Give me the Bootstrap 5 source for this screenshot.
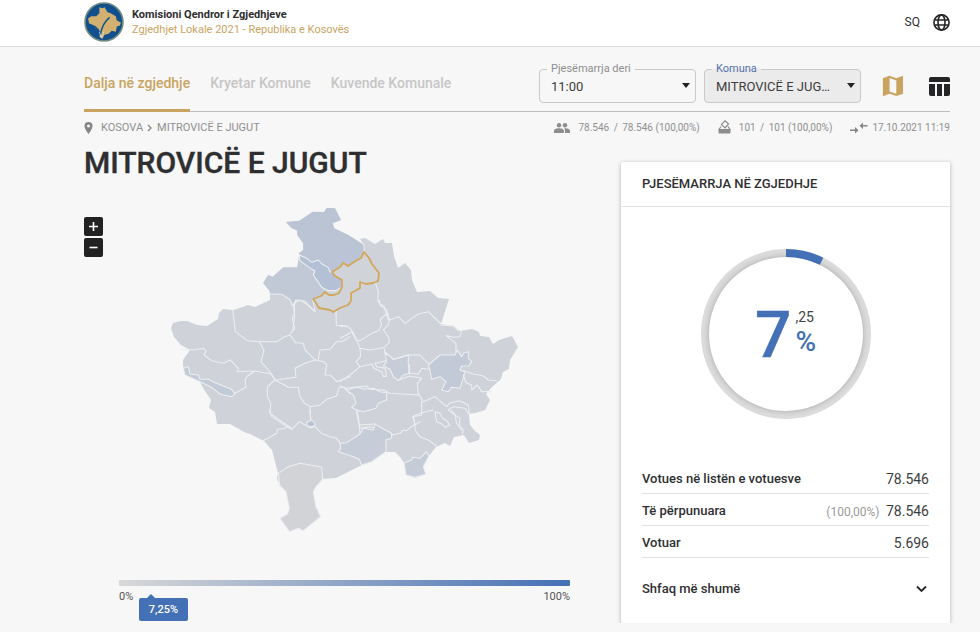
<!DOCTYPE html>
<html lang="sq">
<head>
<meta charset="utf-8">
<meta name="viewport" content="width=device-width, initial-scale=1">
<title>Zgjedhjet Lokale 2021 - Mitrovicë e Jugut</title>
<link href="https://cdn.jsdelivr.net/npm/bootstrap@5.3.0/dist/css/bootstrap.min.css" rel="stylesheet">
<style>
:root{--gold:#c9a461;--blue:#4470b5;--ink:#2f2f31;--muted:#909090}
body{font-family:Roboto,"Liberation Sans",sans-serif;background:#f7f7f7;color:var(--ink);font-size:13px;line-height:16px}
a{text-decoration:none;color:inherit}
.page-pad{padding-left:84px;padding-right:30px}
.site-head{background:#fff;border-bottom:1px solid #dedede;height:47px;padding-bottom:2px}
.brand-title{font-size:11px;line-height:15px;font-weight:700}
.brand-sub{font-size:11px;line-height:15px;color:var(--gold)}
.lang{font-size:12px;gap:13px}
.topbar{height:65px;border-bottom:1px solid #bdbdbd}
.tabs a{font-size:14px;font-weight:500;color:#c6c6c6;height:65px;padding-top:28px;border-bottom:3px solid transparent}
.tabs a.on{color:var(--gold);border-color:var(--gold)}
.tools{padding-top:22px}
.pick{position:relative;width:157px}
.pick label{position:absolute;left:8px;top:-7px;padding:0 4px;font-size:11px;line-height:14px;color:#8f8f8f;background:#f7f7f7}
.pick.busy label{color:#5270ac;background:linear-gradient(#f7f7f7 50%,#ebebeb 50%)}
.pick select{appearance:none;width:100%;height:34px;border:1px solid #c9c9c9;border-radius:4px;padding:2px 30px 0 11px;font-size:13px;color:#3c3c3e;text-overflow:ellipsis;background:transparent}
.pick.busy select{background:#ebebeb}
.pick svg{position:absolute;right:5px;top:14px;pointer-events:none}
.tool{border:0;padding:0;background:none;line-height:0}
.meta{font-size:11px;color:var(--muted);padding-top:8px}
.counts{font-size:10px}
.slash{margin:0 2px}
.gap-sets{gap:18px}
.place{font-size:30px;line-height:36px;font-weight:500;-webkit-text-stroke:.4px;margin:9px 0 0}
.map-side{padding-right:51px}
.zoom-col{padding-top:36px;gap:2px}
.zoom-btn{width:19px;height:19px;border:0;border-radius:2px;background:#222;padding:0;line-height:0}
.legend{margin:40px 0 0 35px;font-size:11px;color:#555}
.ramp{height:6px;border-radius:1px;background:linear-gradient(90deg,#d8d8d8,#4470b5)}
.ends{padding-top:4px;line-height:14px}
.tip{position:absolute;left:20px;top:18px;width:49px;height:23px;line-height:23px;border-radius:2px;background:var(--blue);color:#fff;font-weight:500;text-align:center}
.tip::before{content:"";position:absolute;left:8px;top:-4px;border:4px solid transparent;border-top:0;border-bottom-color:var(--blue)}
.panel{width:329px;margin-top:26px;background:#fff;border-radius:2px;box-shadow:0 1px 4px rgba(0,0,0,.3)}
.panel h2{font-size:13px;line-height:16px;font-weight:500;margin:0;padding:14px 21px;border-bottom:1px solid #e2e2e2}
.dial{position:relative;width:170px;margin:42px auto}
.score{position:absolute;inset:0;color:var(--blue)}
.score-int{font-size:64px;line-height:64px;font-weight:500;padding-top:4px;-webkit-text-stroke:.4px}
.score-dec{font-size:14px;line-height:16px;color:#444}
.score-pct{font-size:28px;line-height:34px;font-weight:500}
.stats{margin:0 21px;width:calc(100% - 42px)}
.stats th,.stats td{height:32px;border-bottom:1px solid #e0e0e0;padding:4px 0 0;vertical-align:middle}
.stats th{font-size:13px;font-weight:500}
.stats td{font-size:14px;line-height:16px;text-align:right;color:#3d3d3f}
.share{font-size:12px;color:#999;margin-right:3px}
.more{border:0;background:none;width:100%;padding:22px 21px 25px;font-size:13px;line-height:18px;font-weight:500;color:var(--ink)}
.regions{stroke:#eceef1;stroke-width:3.2;stroke-linejoin:round;stroke-linecap:round}
</style>
</head>
<body>
<header class="site-head page-pad d-flex align-items-center">
  <a href="#" class="d-flex align-items-center gap-2 flex-grow-1">
    <svg width="40" height="40" viewBox="0 0 39 39" aria-hidden="true">
      <circle cx="19.500" cy="19.500" r="18.500" fill="#11508c" stroke="#728b83" stroke-width="1.600"/>
      <path d="M15 5l3 1 2-1 3 5 3 1 5 3 1 4 4 2-1 3-3 1-1 5-4-1-3 3-4 1-2 4-3-2 1-5-4-3-4-4-3-1-1-5 3-2 5 0 3-3z" fill="#d2b06f"/>
      <path d="M25 15c-5 4-8 10-9 17M9 23c4 2 6 5 7 9" fill="none" stroke="#11508c" stroke-width="1.400"/>
      <path d="M15 29l2 6M19 29l-2 6" stroke="#dce4e8" stroke-width=".8"/>
    </svg>
    <span><span class="d-block brand-title">Komisioni Qendror i Zgjedhjeve</span><span class="d-block brand-sub">Zgjedhjet Lokale 2021 - Republika e Kosovës</span></span>
  </a>
  <a href="#" class="lang d-flex align-items-center" aria-label="Gjuha: SQ"><span>SQ</span>
    <svg width="17" height="17" viewBox="0 0 17 17" fill="none" stroke="#252527" stroke-width="1.600" aria-hidden="true"><circle cx="8.500" cy="8.500" r="7.600"/><ellipse cx="8.500" cy="8.500" rx="3.500" ry="7.600"/><path d="M1.500 6h14M1.500 11h14"/></svg>
  </a>
</header>

<main class="page-pad">
  <div class="topbar d-flex justify-content-between">
    <nav class="tabs d-flex">
      <a href="#" class="on me-3">Dalja në zgjedhje</a><a href="#" class="ms-1 me-3">Kryetar Komune</a><a href="#" class="ms-1">Kuvende Komunale</a>
    </nav>
    <div class="tools d-flex align-items-start">
      <div class="pick me-2">
        <select id="hour"><option>11:00</option></select><label for="hour">Pjesëmarrja deri</label>
        <svg width="10" height="5" viewBox="0 0 10 5" aria-hidden="true"><path d="M1 0h8L5 5z" fill="#222"/></svg>
      </div>
      <div class="pick busy">
        <select id="komuna"><option>MITROVICË E JUGUT</option></select><label for="komuna">Komuna</label>
        <svg width="10" height="5" viewBox="0 0 10 5" aria-hidden="true"><path d="M1 0h8L5 5z" fill="#222"/></svg>
      </div>
      <button class="tool ms-3 mt-1 ps-1" aria-label="Harta"><svg width="24" height="26" viewBox="0 0 24 24" fill="#c9a461"><path d="M20.500 3l-.160.030L15 5.100 9 3 3.360 4.900c-.210.070-.360.250-.360.480V20.500c0 .280.220.500.500.500l.160-.030L9 18.900l6 2.100 5.640-1.900c.210-.070.360-.250.360-.480V3.500c0-.280-.220-.500-.500-.500zM15 19l-6-2.110V5l6 2.110V19z" transform="translate(-1.500 -1.500) scale(1.120)"/></svg></button>
      <button class="tool ms-4 mt-2" aria-label="Tabela"><svg width="21" height="19" viewBox="0 0 21 19" fill="#252527"><path d="M2 0h17a2 2 0 0 1 2 2v3H0V2a2 2 0 0 1 2-2zM0 7h6v12H2a2 2 0 0 1-2-2zM8 7h5v12H8zM15 7h6v10a2 2 0 0 1-2 2h-4z"/></svg></button>
    </div>
  </div>

  <div class="meta d-flex justify-content-between">
    <div class="d-flex align-items-center">
      <svg class="me-2" width="9" height="12" viewBox="0 0 8 12" aria-hidden="true"><path fill="#858585" fill-rule="evenodd" d="M4 0a4 4 0 0 0-4 4c0 3 4 8 4 8s4-5 4-8a4 4 0 0 0-4-4zm0 2.500a1.500 1.500 0 1 1 0 3 1.500 1.500 0 0 1 0-3z"/></svg>
      <a href="#">KOSOVA</a>
      <svg class="mx-1" width="6" height="8" viewBox="0 0 6 8" fill="none" stroke="#858585" stroke-width="1.300" aria-hidden="true"><path d="M1 1l3 3-3 3"/></svg>
      <span>MITROVICË E JUGUT</span>
    </div>
    <div class="counts gap-sets d-flex align-items-center">
      <div class="d-flex align-items-center gap-2">
        <svg width="16" height="10" viewBox="0 0 16 10" fill="#8d8d8d" aria-hidden="true"><circle cx="5" cy="2.200" r="2.200"/><circle cx="11" cy="2.200" r="2.200"/><path d="M0 10V8c0-2 3-2.700 5-2.700S10 6 10 8v2zM11 10h5V8c0-2-3-2.700-5-2.700l-.8.1c.6.600.8 1.500.8 2.600z"/></svg>
        <span>78.546 <span class="slash">/</span> 78.546 (100,00%)</span>
      </div>
      <div class="d-flex align-items-center gap-2">
        <svg width="13" height="16" viewBox="0 0 13 16" aria-hidden="true"><path fill="none" stroke="#8d8d8d" stroke-width="1.200" d="M7 .8l3.600 3.200L7 8 3.400 4.400zM3 6.500L1 9.500h11l-2-3"/><path d="M.5 9.500h12v3a1 1 0 0 1-1 1h-10a1 1 0 0 1-1-1z" fill="#8d8d8d"/></svg>
        <span>101 <span class="slash">/</span> 101 (100,00%)</span>
      </div>
      <div class="d-flex align-items-center gap-1">
        <svg width="18" height="12" viewBox="0 0 18 12" fill="#858585" aria-hidden="true"><path d="M0 7.500h5V5l3.500 3.300L5 11.600V9H0zM17.500 3H13V.5L9.500 3.800 13 7V4.500h4.500z"/></svg>
        <span>17.10.2021 11:19</span>
      </div>
    </div>
  </div>

  <div class="d-flex align-items-start">
    <section class="map-side flex-grow-1">
      <h1 class="place">MITROVICË E JUGUT</h1>
      <div class="d-flex align-items-start">
        <div class="zoom-col d-flex flex-column">
          <button class="zoom-btn" aria-label="Zmadho"><svg width="9" height="9" viewBox="0 0 9 9"><path d="M4.500 0v9M0 4.500h9" stroke="#fff" stroke-width="1.600"/></svg></button>
          <button class="zoom-btn" aria-label="Zvogëlo"><svg width="9" height="9" viewBox="0 0 9 9"><path d="M.5 4.500h8" stroke="#fff" stroke-width="1.600"/></svg></button>
        </div>
        <svg class="flex-grow-1 w-100" viewBox="103 181 467 359" role="img" aria-label="Harta e komunave">
          <path fill="#cfd2d8" d="M286 222L299 221 313 212 324 212 327 208 335 208 341 220 333 223 334 228 348 235 364 245 360 239 365 238 375 244 383 239 385 243 392 243 394 256 398 268 405 263 411 270 412 280 417 292 430 291 438 298 449 299 441 324 454 326 460 331 472 329 479 332 480 336 489 337 493 344 499 340 512 336 518 347 510 360 509 369 503 372 501 379 492 387 486 394 490 400 485 410 475 413 469 414 470 425 475 431 480 435 479 440 469 443 464 435 454 437 450 446 445 443 436 447 428 457 423 467 426 474 415 478 406 475 404 463 400 457 395 452 385 452 372 462 362 465 358 467 342 475 336 478 323 479 316 487 313 492 316 507 320 517 303 531 298 528 290 532 280 518 288 514 290 508 286 492 280 486 277 478 278 473 272 450 264 441 250 434 244 432 237 428 230 424 217 424 215 412 209 408 211 400 203 388 199 380 185 373 183 366 183 360 190 350 181 345 174 337 171 328 173 323 180 321 187 321 197 325 207 326 218 319 219 313 223 309 234 310 248 305 255 307 270 300 270 291 263 283 268 275 273 277 283 268 297 268 299 255 303 250 303 243 297 235 297 230 291 228Z"/>
          <!-- northern municipalities -->
          <g transform="translate(260 200) scale(.3333)" class="regions">
            <path fill="#bac4d5" stroke="none" d="M78 66L118 62 158 35 192 36 200 24 225 25 243 60 218 70 222 85 265 105 312 135 312 155 300 172 265 197 250 188 215 215 175 180 155 187 140 175 115 160 130 150 130 130 112 105 112 92 95 84Z"/>
            <path fill="#c2c9d6" stroke="none" d="M118 180L112 202 70 202 38 230 25 225 10 250 28 272 30 282 65 283 92 300 95 315 103 318 107 300 145 305 165 335 158 295 195 275 160 225 160 208Z"/>
            <path fill="#b3c0d5" d="M118 165L140 175 155 187 175 180 186 192 205 203 210 215 248 238 245 262 228 272 205 272 185 262 172 242 160 225 165 212 152 206 120 182Z"/>
            <path fill="none" d="M312 133V155M30 282L65 283 92 300 95 315 103 318 107 300 135 303 143 315 165 335 158 297M347 250L355 275 353 300 360 312 372 318 385 360M103 318L104 350 98 390M228 330L229 376 260 378"/>
          </g>
          <!-- western municipalities -->
          <g transform="translate(160 300) scale(.3333)" class="regions">
            <path fill="#cbd0d9" d="M298 125L352 125 370 112 390 105 407 128 430 130 435 150 465 180 435 190 405 205 408 232 345 240 325 210 303 185 312 150Z"/>
            <path fill="#c2cad7" d="M70 205L85 200 90 222 115 225 120 238 145 238 165 248 215 268 225 282 215 290 180 282 155 262 120 245 75 225Z"/>
            <path fill="none" d="M218 28L226 95 262 122 298 125M390 102L404 85 397 55 403 40 400 10M62 147L100 150 130 145 138 152 132 165 155 182 190 190 210 180 222 192 235 205 232 215 285 213 335 222 345 240M285 213L262 228 255 240 258 262 225 280M345 240L385 262 415 262 420 290 432 308 450 320 478 316 500 298 530 288 538 262 552 262 570 282M345 240L322 260 322 290 332 310 330 340 380 375 395 385M465 180L492 185 500 195 495 225 512 226 530 245 570 230M475 178L480 150 510 148 530 125 550 123 570 110M450 320L452 360M400 10L420 0 440 12 465 35"/>
          </g>
          <!-- eastern municipalities -->
          <g transform="translate(340 300) scale(.3333)" class="regions">
            <path fill="#c3cad7" d="M265 195L300 165 345 165 352 150 365 170 372 158 385 155 385 175 395 185 387 197 365 198 360 210 375 215 368 240 360 265 335 262 325 275 305 270 318 245 300 230 275 238 270 210Z"/>
            <path fill="#c7cdd8" d="M135 155L160 178 205 165 205 195 210 220 190 225 175 242 160 230 150 208 130 198 140 185Z"/>
            <path fill="#c9ced9" d="M18 270L50 262 75 268 100 265 120 275 140 278 140 300 115 310 108 325 70 335 50 330 35 322 48 310 40 285Z"/>
            <path fill="none" d="M118 0L120 15 140 30 148 60 175 50 195 70 215 55 235 42 265 35 303 72M140 40L120 60 125 75 115 92 95 100 60 122 48 120 35 95 20 105 0 115M0 78L25 80 40 98 60 145 90 150 130 143 148 128 145 110 130 90 145 75 148 60M133 145L135 160 152 170 160 178 185 172 205 165 240 165 252 178 265 190M303 75L340 78 355 92M348 155L348 130 318 107 345 112 360 110 365 92M370 212L400 222 430 228 445 240 470 242M370 225L378 248 395 255 395 270 412 255 425 275 455 275M60 145L62 170 48 185 60 200 30 225 0 245M60 200L95 192 102 205 125 215 130 230 140 228 135 205 110 200 105 190 138 182M175 240L210 228 245 235M210 195L205 220 235 222 245 205 265 208M245 235L232 250 235 285 150 280 130 270 90 268 80 258 15 265 0 258M235 280L250 305 285 290 320 320 330 308 360 302 385 315 388 340M245 305L245 345 220 350 225 375 240 365M50 330L52 350 60 385 90 380 115 388M325 330L340 320 375 325 385 340M325 330L345 345 350 370 365 390M285 335L300 340 308 355 320 362 330 375 315 382 305 372 290 365Z"/>
          </g>
          <!-- southern municipalities -->
          <g transform="translate(230 410) scale(.3333)" class="regions">
            <path fill="#c7cdd8" d="M330 100L350 98 390 72 400 55 430 60 435 42 448 50 485 70 485 85 468 90 468 125 425 155 395 165 388 148 370 140 325 125 332 115Z"/>
            <path fill="#c5ccd7" d="M522 160L545 150 548 142 570 145 590 125 596 140 580 170 588 193 555 202 528 195Z"/>
            <path fill="#d1d3d7" d="M145 190L175 170 210 160 240 165 275 172 278 208 258 230 250 245 258 290 272 320 220 362 205 355 178 365 150 325 172 312 178 295 168 245 150 228Z"/>
            <path fill="#b8c3d5" d="M230 38L245 30 256 42 246 53 233 50Z"/>
            <path fill="none" d="M100 92L140 70 142 58 165 55 172 50 185 58 208 35 230 48 255 50 275 70 300 80 320 85 330 100M118 0L125 20 170 50M240 0L242 30M380 0L385 20 390 70M390 45L435 42M485 75L510 70 520 60 530 62 555 42 548 20 570 10 610 0M555 42L555 60 570 80 595 90 620 108M665 0L675 15 690 25 688 45 700 60 697 72"/>
          </g>
          <path fill="#d0d3d7" stroke="#d3a75b" stroke-width="1.800" stroke-linejoin="round" d="M364 252L361 258 354 262 348 266 343 263 340 267 332 272 335 276 342 280 342 287 339 293 334 295 329 295 325 292 321 296 313 299 316 303 319 308 330 310 333 312 340 308 348 305 351 301 351 293 355 291 360 288 360 282 366 284 373 283 378 281 379 273 372 264 369 258Z"/>
        </svg>
      </div>
      <div class="legend position-relative">
        <div class="ramp"></div>
        <div class="ends d-flex justify-content-between"><span>0%</span><span>100%</span></div>
        <div class="tip">7,25%</div>
      </div>
    </section>

    <aside class="panel flex-shrink-0">
      <h2>PJESËMARRJA NË ZGJEDHJE</h2>
      <div class="dial">
        <svg class="d-block" width="170" height="170" viewBox="0 0 170 170" aria-hidden="true">
          <defs><radialGradient id="rim" gradientUnits="userSpaceOnUse" cx="85" cy="85" r="85"><stop offset=".9" stop-color="#bdbdbd"/><stop offset=".93" stop-color="#d0d0d0"/><stop offset=".97" stop-color="#dbdbdb"/></radialGradient></defs>
          <circle cx="85" cy="85" r="81" fill="none" stroke="url(#rim)" stroke-width="8"/>
          <circle cx="85" cy="85" r="81" fill="none" stroke="#4470b5" stroke-width="8" pathLength="100" stroke-dasharray="7.250 92.750" transform="rotate(-90 85 85)"/>
        </svg>
        <div class="score d-flex align-items-center justify-content-center">
          <span class="score-int">7</span>
          <span class="d-flex flex-column ms-1"><span class="score-dec">,25</span><span class="score-pct">%</span></span>
        </div>
      </div>
      <table class="stats">
        <tr><th scope="row">Votues në listën e votuesve</th><td>78.546</td></tr>
        <tr><th scope="row">Të përpunuara</th><td><span class="share">(100,00%)</span> 78.546</td></tr>
        <tr><th scope="row">Votuar</th><td>5.696</td></tr>
      </table>
      <button class="more d-flex justify-content-between align-items-center">Shfaq më shumë
        <svg width="15" height="8" viewBox="0 0 15 8" fill="none" stroke="#252527" stroke-width="1.800" aria-hidden="true"><path d="M3 1.500l4.500 4.500L12 1.500"/></svg>
      </button>
    </aside>
  </div>
</main>
<script src="https://cdn.jsdelivr.net/npm/bootstrap@5.3.0/dist/js/bootstrap.bundle.min.js"></script>
</body>
</html>
